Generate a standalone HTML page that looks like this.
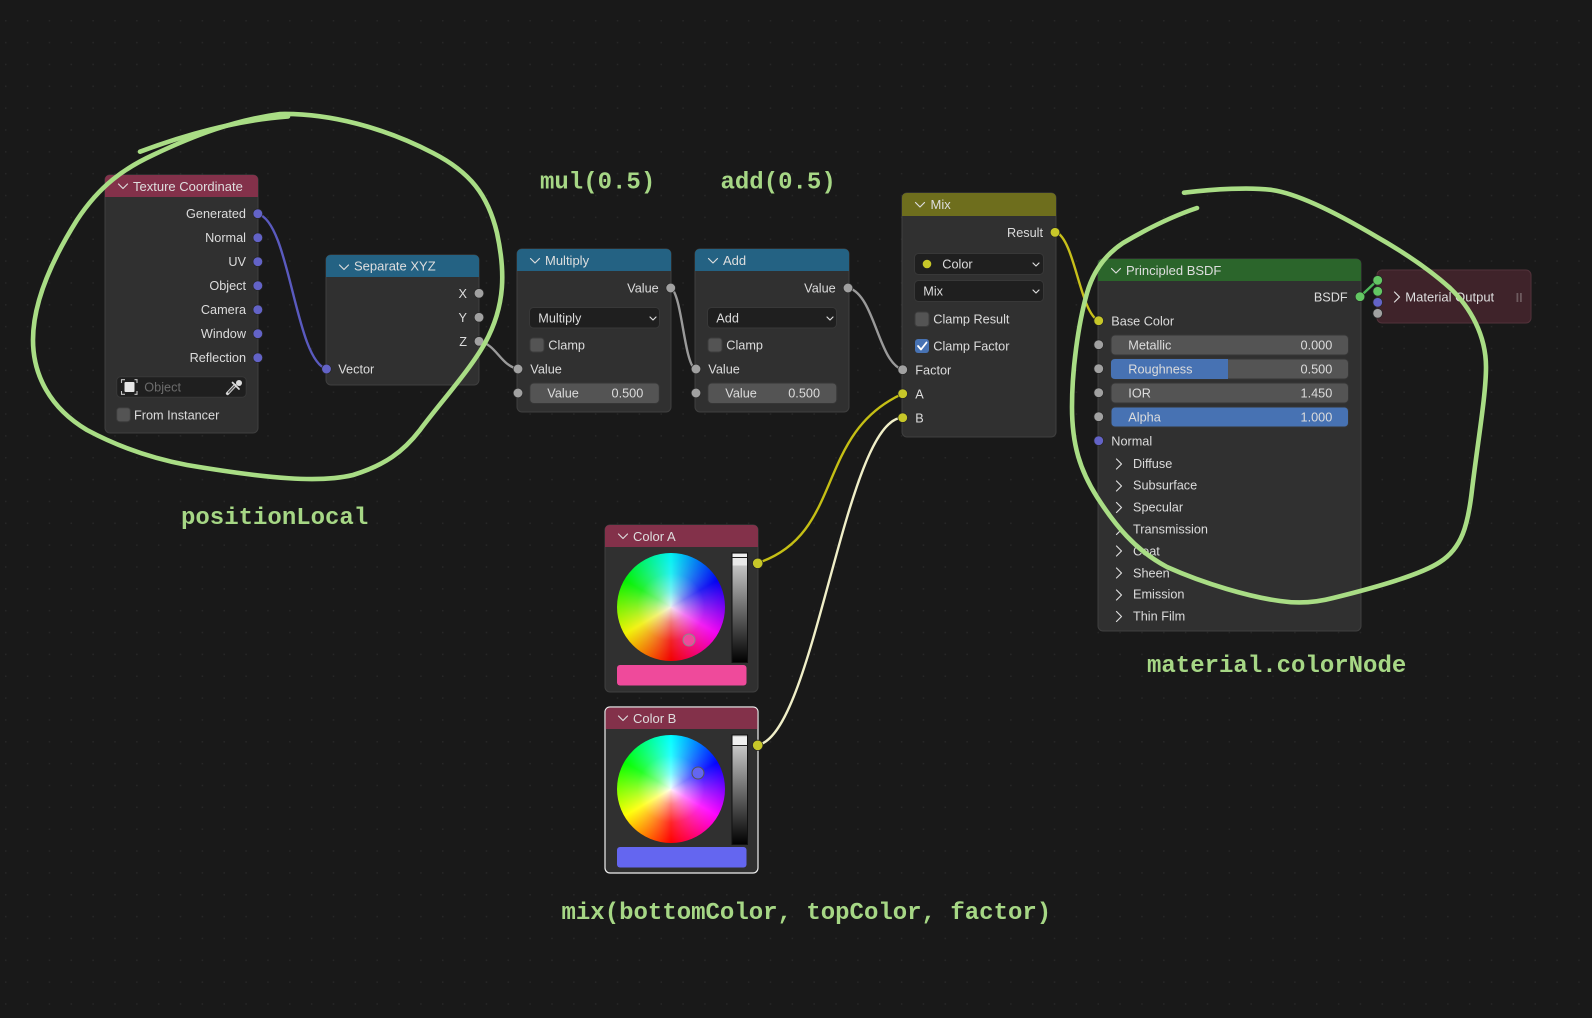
<!DOCTYPE html>
<html><head><meta charset="utf-8"><style>
html,body{margin:0;padding:0;background:#191919;width:1592px;height:1018px;overflow:hidden}
svg{display:block;position:absolute;left:0;top:0}
text{font-family:"Liberation Sans",sans-serif;font-size:12.7px;fill:#dcdcdc}
.e{text-anchor:end}
.h{fill:#dedede;font-size:13px}
.m{font-family:"Liberation Mono",monospace;font-size:24px;font-weight:bold;fill:#a6d785}
.n{fill:#303030;stroke:#3f3f3f;stroke-width:1}
.f{fill:#545454;stroke:#363636;stroke-width:1}
.d{fill:#1f1f1f;stroke:#383838;stroke-width:1}
.c{fill:#545454;stroke:#3c3c3c;stroke-width:1}
.ch{fill:none;stroke:#dcdcdc;stroke-width:1.2;stroke-linecap:round;stroke-linejoin:round}
.w{fill:none;stroke-width:2.4;stroke-linecap:round}
.s{stroke:#262626;stroke-width:.7}
.v{fill:#6363c7}.g{fill:#a1a1a1}.y{fill:#c7c729}.gr{fill:#63c763}
.wheel{width:108px;height:108px;border-radius:50%;background:radial-gradient(closest-side,rgba(255,255,255,.95),rgba(255,255,255,.5) 28%,rgba(255,255,255,.15) 62%,rgba(255,255,255,0) 100%),conic-gradient(#00ffff,#0000ff,#ff00ff,#ff0000,#ffff00,#00ff00,#00ffff)}
.an{fill:none;stroke:#a9dd85;stroke-width:4.6;stroke-linecap:round;stroke-linejoin:round}
</style></head><body>
<svg width="1592" height="1018" viewBox="0 0 1592 1018" xmlns="http://www.w3.org/2000/svg">
<defs>
<pattern id="dots" x="5" y="20" width="21.85" height="21.85" patternUnits="userSpaceOnUse"><rect x="0" y="0" width="1.5" height="1.5" fill="#272727"/></pattern>
<linearGradient id="val" x1="0" y1="0" x2="0" y2="1"><stop offset="0" stop-color="#dcdcdc"/><stop offset="1" stop-color="#000"/></linearGradient>
</defs>
<rect width="1592" height="1018" fill="#191919"/>
<rect width="1592" height="1018" fill="url(#dots)"/>

<!-- Texture Coordinate -->
<rect class="n" x="105" y="175" width="153" height="258" rx="5"/>
<path d="M105 197V180Q105 175 110 175H253Q258 175 258 180V197Z" fill="#83314a"/>
<polyline class="ch" points="118.5,184 123,188.5 127.5,184"/>
<text class="h" x="133" y="191">Texture Coordinate</text>
<text class="e" x="246" y="218">Generated</text>
<text class="e" x="246" y="242">Normal</text>
<text class="e" x="246" y="266">UV</text>
<text class="e" x="246" y="290">Object</text>
<text class="e" x="246" y="314">Camera</text>
<text class="e" x="246" y="338">Window</text>
<text class="e" x="246" y="362">Reflection</text>
<rect class="d" x="116.7" y="376.7" width="129.5" height="20.6" rx="4"/>
<rect x="124.5" y="382" width="10" height="10" rx="1" fill="#e6e6e6"/>
<path d="M121.5 383V379.7H125M134.5 379.7H137V383M137 391V394.3H134.5M125 394.3H121.5V391" fill="none" stroke="#c4c4c4" stroke-width="1.1"/>
<text x="144.3" y="391.5" style="fill:#6c6c6c">Object</text>
<path d="M227.5 393.5L235 385.5" stroke="#d8d8d8" stroke-width="3.2" stroke-linecap="round"/>
<path d="M228.5 392.5L235 385.5" stroke="#555" stroke-width="1.3" stroke-linecap="round"/>
<path d="M232.5 382.5L239 389" stroke="#dcdcdc" stroke-width="1.7" stroke-linecap="round"/>
<circle cx="239" cy="383" r="3" fill="#dcdcdc"/>
<rect class="c" x="116.7" y="407.7" width="13.6" height="14" rx="3"/>
<text x="134" y="419.3">From Instancer</text>

<!-- Separate XYZ -->
<rect class="n" x="326" y="255" width="153" height="130" rx="5"/>
<path d="M326 277V260Q326 255 331 255H474Q479 255 479 260V277Z" fill="#246283"/>
<polyline class="ch" points="339.5,265 344,269.5 348.5,265"/>
<text class="h" x="354" y="270.5">Separate XYZ</text>
<text class="e" x="467" y="298">X</text>
<text class="e" x="467" y="322">Y</text>
<text class="e" x="467" y="346">Z</text>
<text x="338.3" y="373.5">Vector</text>

<!-- Multiply -->
<rect class="n" x="517" y="249" width="154" height="163" rx="5"/>
<path d="M517 271V254Q517 249 522 249H666Q671 249 671 254V271Z" fill="#246283"/>
<polyline class="ch" points="530.5,258.5 535,263 539.5,258.5"/>
<text class="h" x="545" y="265">Multiply</text>
<text class="e" x="658.7" y="292.5">Value</text>
<rect class="d" x="529.5" y="307.5" width="130" height="20.5" rx="4"/>
<text x="538.3" y="322.5">Multiply</text>
<polyline class="ch" points="650,317 653,320 656,317"/>
<rect class="c" x="530" y="338" width="14" height="14" rx="3"/>
<text x="548.3" y="349.5">Clamp</text>
<text x="530.3" y="373.5">Value</text>
<rect class="f" x="529.8" y="383" width="129.5" height="20.5" rx="4"/>
<text x="547.3" y="397.5">Value</text>
<text class="e" x="643.3" y="397.5">0.500</text>

<!-- Add -->
<rect class="n" x="695" y="249" width="154" height="163" rx="5"/>
<path d="M695 271V254Q695 249 700 249H844Q849 249 849 254V271Z" fill="#246283"/>
<polyline class="ch" points="708.5,258.5 713,263 717.5,258.5"/>
<text class="h" x="723" y="265">Add</text>
<text class="e" x="835.7" y="292.5">Value</text>
<rect class="d" x="707.5" y="307.5" width="129" height="20.5" rx="4"/>
<text x="716.3" y="322.5">Add</text>
<polyline class="ch" points="827,317 830,320 833,317"/>
<rect class="c" x="708" y="338" width="14" height="14" rx="3"/>
<text x="726.3" y="349.5">Clamp</text>
<text x="708.3" y="373.5">Value</text>
<rect class="f" x="707.8" y="383" width="129" height="20.5" rx="4"/>
<text x="725.3" y="397.5">Value</text>
<text class="e" x="820" y="397.5">0.500</text>

<!-- Mix -->
<rect class="n" x="902" y="193" width="154" height="244" rx="5"/>
<path d="M902 216V198Q902 193 907 193H1051Q1056 193 1056 198V216Z" fill="#6e6e1d"/>
<polyline class="ch" points="915.5,202.5 920,207 924.5,202.5"/>
<text class="h" x="930.5" y="209">Mix</text>
<text class="e" x="1043" y="237">Result</text>
<rect class="d" x="914.5" y="253.5" width="129" height="21" rx="4"/>
<circle cx="927" cy="264" r="4.3" fill="#c7c729"/>
<text x="942.3" y="268.5">Color</text>
<polyline class="ch" points="1033,263 1036,266 1039,263"/>
<rect class="d" x="914.5" y="280.5" width="129" height="21" rx="4"/>
<text x="923.3" y="295.5">Mix</text>
<polyline class="ch" points="1033,290 1036,293 1039,290"/>
<rect class="c" x="915" y="312" width="14" height="14.5" rx="3"/>
<text x="933.3" y="323.3">Clamp Result</text>
<rect x="915" y="339" width="14" height="14" rx="3" fill="#4772b3"/>
<polyline points="918,346 921,349.5 926.5,342.5" fill="none" stroke="#fff" stroke-width="1.8" stroke-linecap="round" stroke-linejoin="round"/>
<text x="933.3" y="350.5">Clamp Factor</text>
<text x="915.3" y="374.3">Factor</text>
<text x="915.3" y="398.3">A</text>
<text x="915.3" y="422.3">B</text>

<!-- Principled BSDF -->
<rect class="n" x="1098" y="259" width="263" height="372" rx="5"/>
<path d="M1098 281V264Q1098 259 1103 259H1356Q1361 259 1361 264V281Z" fill="#2b652b"/>
<polyline class="ch" points="1111.5,268.5 1116,273 1120.5,268.5"/>
<text class="h" x="1126" y="275">Principled BSDF</text>
<text class="e" x="1347.7" y="301.3">BSDF</text>
<text x="1111.3" y="325.3">Base Color</text>
<rect class="f" x="1111" y="335" width="237.5" height="20" rx="4"/>
<text x="1128.3" y="349.3">Metallic</text>
<text class="e" x="1332.3" y="349.3">0.000</text>
<rect class="f" x="1111" y="359" width="237.5" height="20" rx="4"/>
<path d="M1228 359H1115Q1111 359 1111 363V375Q1111 379 1115 379H1228Z" fill="#4772b3"/>
<text x="1128.3" y="373.3">Roughness</text>
<text class="e" x="1332.3" y="373.3">0.500</text>
<rect class="f" x="1111" y="383" width="237.5" height="20" rx="4"/>
<text x="1128.3" y="397.3">IOR</text>
<text class="e" x="1332.3" y="397.3">1.450</text>
<rect x="1111" y="407" width="237.5" height="20" rx="4" fill="#4772b3" stroke="#363636"/>
<text x="1128.3" y="421.3">Alpha</text>
<text class="e" x="1332.3" y="421.3">1.000</text>
<text x="1111.3" y="445.3">Normal</text>
<text x="1133" y="468">Diffuse</text><polyline class="ch" points="1116.5,459 1121.5,464 1116.5,469"/>
<text x="1133" y="489.5">Subsurface</text><polyline class="ch" points="1116.5,481 1121.5,486 1116.5,491"/>
<text x="1133" y="511.5">Specular</text><polyline class="ch" points="1116.5,502.5 1121.5,507.5 1116.5,512.5"/>
<text x="1133" y="533.5">Transmission</text><polyline class="ch" points="1116.5,524.5 1121.5,529.5 1116.5,534.5"/>
<text x="1133" y="555.3">Coat</text><polyline class="ch" points="1116.5,546 1121.5,551 1116.5,556"/>
<text x="1133" y="577.3">Sheen</text><polyline class="ch" points="1116.5,568 1121.5,573 1116.5,578"/>
<text x="1133" y="598.5">Emission</text><polyline class="ch" points="1116.5,590 1121.5,595 1116.5,600"/>
<text x="1133" y="620.5">Thin Film</text><polyline class="ch" points="1116.5,611.5 1121.5,616.5 1116.5,621.5"/>

<!-- Material Output -->
<rect x="1377" y="270" width="154" height="53" rx="5" fill="#3f232a" stroke="#52323a"/>
<polyline class="ch" points="1394.5,292 1399.5,297 1394.5,302"/>
<text class="h" x="1405.3" y="301.3">Material Output</text>
<rect x="1516.5" y="293" width="1.8" height="9" fill="#6d5a5e"/><rect x="1520" y="293" width="1.8" height="9" fill="#6d5a5e"/>

<!-- Color A -->
<rect class="n" x="605" y="525" width="153" height="167" rx="5"/>
<path d="M605 547V530Q605 525 610 525H753Q758 525 758 530V547Z" fill="#83314a"/>
<polyline class="ch" points="618.5,534 623,538.5 627.5,534"/>
<text class="h" x="633" y="541">Color A</text>
<foreignObject x="617" y="553.3" width="108" height="108"><div xmlns="http://www.w3.org/1999/xhtml" class="wheel" style="filter:brightness(.95)"></div></foreignObject>
<circle cx="689" cy="640" r="6" fill="#ef4a9b" stroke="#8a8a8a" stroke-width="1"/>
<rect x="732" y="553" width="15.5" height="109.5" fill="url(#val)" stroke="#111"/>
<rect x="732.5" y="554" width="14.5" height="3" fill="#f0f0f0"/>
<rect x="732" y="557" width="15.5" height="1" fill="#222"/>
<rect x="732.5" y="558" width="14.5" height="7.5" fill="#e8e8e8"/>
<rect x="617" y="665" width="129.5" height="20.5" rx="3" fill="#ef4a9b"/>

<!-- Color B -->
<rect x="605" y="707" width="153" height="166" rx="5" fill="#303030" stroke="#f0f0f0" stroke-width="1.2"/>
<path d="M605.6 729V712Q605.6 707.6 610 707.6H753Q757.4 707.6 757.4 712V729Z" fill="#83314a"/>
<polyline class="ch" points="618.5,716 623,720.5 627.5,716"/>
<text class="h" x="633" y="723">Color B</text>
<foreignObject x="617" y="735.3" width="108" height="108"><div xmlns="http://www.w3.org/1999/xhtml" class="wheel"></div></foreignObject>
<circle cx="698" cy="773" r="6" fill="#6466f0" stroke="#555" stroke-width="1"/>
<rect x="732" y="735" width="15.5" height="109.5" fill="url(#val)" stroke="#111"/>
<rect x="732.5" y="737" width="14.5" height="8" fill="#f0f0f0"/>
<rect x="732" y="745" width="15.5" height="1" fill="#222"/>
<rect x="617" y="847" width="129.5" height="20.5" rx="3" fill="#6466f0"/>

<!-- Wires -->
<path class="w" stroke="#5a5abf" d="M258 214C290 222 295 360 326.5 369"/>
<path class="w" stroke="#9a9a9a" d="M479 341C497 345 500 365 518 369"/>
<path class="w" stroke="#9a9a9a" d="M671 288C682 295 684 362 695 369"/>
<path class="w" stroke="#9a9a9a" d="M849 288C875 296 878 362 902.7 369.7"/>
<path class="w" stroke="#c7bf1a" d="M1056 232C1075 240 1080 313 1098.7 320.7"/>
<path class="w" stroke="#c5bf15" d="M757.7 563C845 534 814 434 902.7 393.7"/>
<path class="w" stroke="#f0efc8" d="M757.7 745C815 735 845 418 902.7 417.7"/>
<path class="w" stroke="#4fb85a" d="M1360 296.7L1377.7 280"/>

<!-- Sockets -->
<g class="s">
<circle class="v" cx="257.8" cy="213.7" r="4.8"/><circle class="v" cx="257.8" cy="237.7" r="4.8"/><circle class="v" cx="257.8" cy="261.7" r="4.8"/><circle class="v" cx="257.8" cy="285.7" r="4.8"/><circle class="v" cx="257.8" cy="309.7" r="4.8"/><circle class="v" cx="257.8" cy="333.7" r="4.8"/><circle class="v" cx="257.8" cy="357.7" r="4.8"/>
<circle class="g" cx="479" cy="293.3" r="4.8"/><circle class="g" cx="479" cy="317.3" r="4.8"/><circle class="g" cx="479" cy="341.3" r="4.8"/>
<circle class="v" cx="326.5" cy="369" r="4.8"/>
<circle class="g" cx="670.7" cy="288" r="4.8"/><circle class="g" cx="518" cy="369" r="4.8"/><circle class="g" cx="518" cy="393" r="4.8"/>
<circle class="g" cx="848" cy="288" r="4.8"/><circle class="g" cx="696" cy="369" r="4.8"/><circle class="g" cx="696" cy="393" r="4.8"/>
<circle class="y" cx="1055" cy="232.3" r="4.8"/><circle class="g" cx="902.7" cy="369.7" r="4.8"/><circle class="y" cx="902.7" cy="393.7" r="4.8"/><circle class="y" cx="902.7" cy="417.7" r="4.8"/>
<circle class="gr" cx="1360" cy="296.7" r="4.8"/>
<circle class="y" cx="1098.7" cy="320.7" r="4.8"/><circle class="g" cx="1098.7" cy="344.7" r="4.8"/><circle class="g" cx="1098.7" cy="368.7" r="4.8"/><circle class="g" cx="1098.7" cy="392.7" r="4.8"/><circle class="g" cx="1098.7" cy="416.7" r="4.8"/><circle class="v" cx="1098.7" cy="440.7" r="4.8"/>
<circle class="gr" cx="1377.7" cy="280.3" r="4.8"/><circle class="gr" cx="1377.7" cy="291.3" r="4.8"/><circle class="v" cx="1377.7" cy="302.3" r="4.8"/><circle class="g" cx="1377.7" cy="313.3" r="4.8"/>
<circle class="y" cx="757.7" cy="563.3" r="5.2"/><circle class="y" cx="757.7" cy="745.3" r="5.2"/>
</g>

<!-- Annotations -->
<path class="an" d="M140 151.7C190 133 240 120 288 116.5"/>
<path class="an" d="M280 114C330 113 385 128 433 153C470 172 488 195 497 233C505 270 506 305 485 343C470 370 440 403 420 430C403 452 385 465 353 475C320 483 270 479 187 465C150 458 115 445 87 430C50 408 33 375 33 340C33 300 55 255 77 220C100 185 125 168 153 155C195 135 235 120 280 114"/>
<path class="an" d="M1184 192.7C1215 189 1250 187 1272 190C1300 194 1340 215 1377 237C1405 253 1430 270 1450 288C1470 307 1486 335 1486 367C1486 395 1478 440 1472 490C1468 525 1462 548 1440 562C1425 572 1390 584 1333 598C1318 602 1300 604 1280 601C1250 597 1205 584 1167 567C1135 550 1115 525 1097 497C1080 470 1072 445 1072 407C1072 370 1078 325 1087 293C1093 272 1105 255 1123 243C1145 230 1170 217 1197 208"/>
<text class="m" x="540" y="188.5">mul(0.5)</text>
<text class="m" x="720.5" y="188.5">add(0.5)</text>
<text class="m" x="181" y="524">positionLocal</text>
<text class="m" x="1147" y="671.8">material.colorNode</text>
<text class="m" x="561.5" y="919">mix(bottomColor, topColor, factor)</text>
</svg>
</body></html>
